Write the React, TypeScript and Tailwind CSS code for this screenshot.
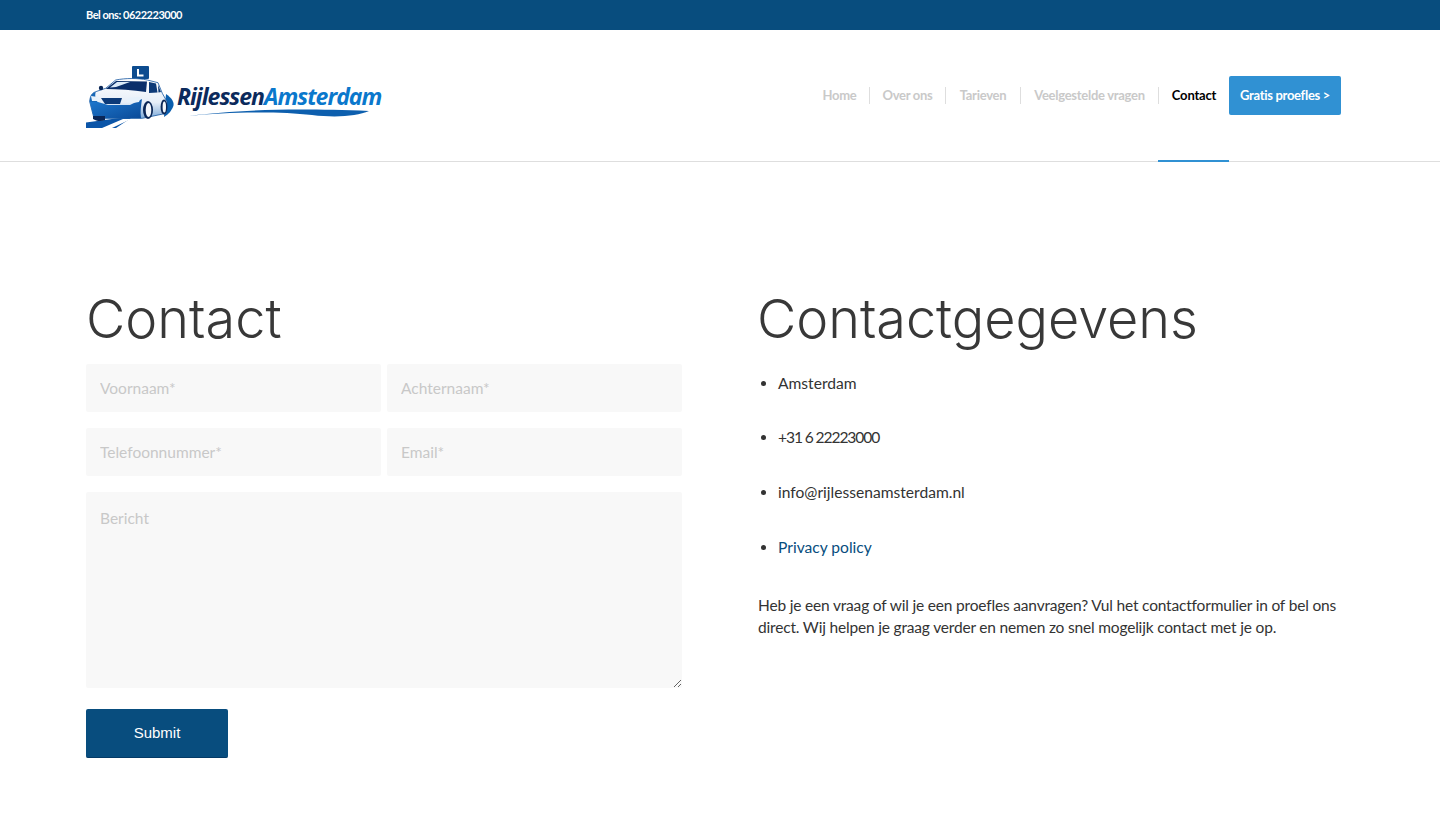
import React from 'react';

const NAV_ITEMS = [
  { label: 'Home', width: 'w-[60px]' },
  { label: 'Over ons', width: 'w-[76px]' },
  { label: 'Tarieven', width: 'w-[75px]' },
  { label: 'Veelgestelde vragen', width: 'w-[137px]' },
];

const inputClass =
  "h-12 w-full rounded-[2px] bg-[#f8f8f8] px-3.5 text-[15.5px] text-[#333] outline-none placeholder:text-[#c8c8c8]";

function LogoCar() {
  return (
    <svg width="90" height="62" viewBox="0 0 90 62" className="shrink-0">
      <defs>
        <linearGradient id="side" x1="0" y1="0" x2="0" y2="1">
          <stop offset="0" stopColor="#ffffff" />
          <stop offset="0.6" stopColor="#e6eef8" />
          <stop offset="1" stopColor="#7fabd9" />
        </linearGradient>
        <linearGradient id="front" x1="0" y1="0" x2="1" y2="1">
          <stop offset="0" stopColor="#1f7ad0" />
          <stop offset="1" stopColor="#0a4a98" />
        </linearGradient>
      </defs>
      {/* swoosh behind car */}
      <path d="M80 28 C86 32 89 37 87 41 C85 45 83 48 78 51 Z" fill="#0b5fae" />
      {/* road */}
      <path d="M0 62 L0 56.5 L48 50 L30 62 Z" fill="#0b55a8" />
      <path d="M16 62 L37 53 L45 53 L26 62 Z" fill="#ffffff" />
      {/* L sign */}
      <rect x="46" y="0" width="17" height="13" rx="1" fill="#0d4c8f" />
      <path d="M52 3 V9.5 H57.5" fill="none" stroke="#ffffff" strokeWidth="2" />
      {/* body */}
      <path d="M3.7 35.7 C4 30 6 27 9.7 25.7 L19.7 22.3 L29.7 14 C40 12 52 12 61.3 14 L72 16.7 L76.3 27.3 L81 35.7 L80.3 47.3 L56.3 52.3 L8 52.3 Z" fill="url(#side)" stroke="#14559f" strokeWidth="0.8" />
      {/* lower front */}
      <path d="M3.7 35.7 C5 33 7 33 12 36 L22 39 L44 39 L52 35 L56 33 C55 40 54 46 55 52.3 L8 52.3 Z" fill="url(#front)" />
      {/* left fender */}
      <path d="M3.7 35.7 C4 30 6 27 9.7 25.7 C9 29 9 31 11 36 Z" fill="#1667b7" />
      {/* windshield */}
      <path d="M19.7 23 L30 15 L61 15.5 L60 26 C47 24 32 23 19.7 23 Z" fill="#0a2f6b" />
      <path d="M24 21.5 L31 16 L44 16 L30 21 Z" fill="#dcebf9" />
      {/* side windows */}
      <path d="M63 16 L70 17.5 L71.5 26.5 L63 27 Z" fill="#0d3a78" />
      <path d="M72 19 L75 26 L72.5 26.5 Z" fill="#0d3a78" />
      {/* grille */}
      <path d="M15 32 H36 L34 38 H19 Z" fill="#0c3a78" />
      {/* headlights */}
      <path d="M5 30 L12 31 L13 35 L6 35 Z" fill="#e6f1fb" />
      <path d="M41 33 C45 31 50 31 55 31 L53 36 C49 37 45 37 41 36 Z" fill="#e6f1fb" />
      {/* wheels */}
      <path d="M7 50 H19 V54 C15 56 10 55 7 53 Z" fill="#0a2656" />
      <ellipse cx="62" cy="44" rx="5" ry="9" fill="#0a2656" />
      <ellipse cx="62.5" cy="44" rx="2.8" ry="7" fill="#f4f7fb" />
      <ellipse cx="78" cy="41" rx="3.4" ry="7.5" fill="#0a2656" />
      <ellipse cx="78.3" cy="41" rx="1.7" ry="5.5" fill="#f4f7fb" />
      {/* mirror */}
      <circle cx="15" cy="22" r="2.2" fill="#0a2656" />
    </svg>
  );
}

function Logo() {
  return (
    <div className="flex items-start">
      <LogoCar />
      <div className="ml-[1px] mt-[17px] flex w-[206px] flex-col">
        <div className="whitespace-nowrap text-[23px] font-bold italic leading-[26px] tracking-[-0.98px] font-['Open_Sans',sans-serif]">
          <span className="text-[#0b2a5c]">Rijlessen</span>
          <span className="text-[#0a78cc]">Amsterdam</span>
        </div>
        <svg width="206" height="10" viewBox="0 0 206 10" className="mt-[-1px]">
          <path d="M11 8 C60 2 110 0 192 3 C180 8 160 10 135 7 C100 3 50 4 11 8 Z" fill="#0d5fae" />
        </svg>
      </div>
    </div>
  );
}

export default function App() {
  return (
    <div className="min-h-[820px] bg-white font-['Lato',sans-serif] text-[#333]">
      {/* TOP BAR */}
      <div className="h-[30px] bg-[#084d7e]">
        <div className="mx-[86px] flex h-full items-center text-[11px] font-bold tracking-[-0.48px] text-white">
          Bel ons: 0622223000
        </div>
      </div>

      {/* HEADER */}
      <header className="h-[132px] border-b border-[#dedede]">
        <div className="ml-[86px] mr-[99px] flex h-[131px] justify-between">
          <div className="pt-9">
            <Logo />
          </div>
          <nav className="flex items-center">
            {NAV_ITEMS.map((item, i) => (
              <div key={item.label} className={`flex h-[17px] items-center justify-center text-[13px] font-bold tracking-[-0.28px] text-[#c9c9c9] ${item.width} ${i < 3 ? 'border-r border-[#dedede]' : ''}`}>
                {item.label}
              </div>
            ))}
            <div className="relative flex h-full w-[71px] items-center justify-center">
              <span className="h-[17px] w-full border-l border-[#dedede] text-center text-[13px] font-bold leading-[17px] tracking-[-0.2px] text-black">
                Contact
              </span>
              <span className="absolute inset-x-0 bottom-[-1px] h-0.5 bg-[#3091d3]" />
            </div>
            <a className="flex h-[39px] w-[112px] items-center justify-center rounded-[2px] bg-[#3091d3] text-[13px] font-bold tracking-[-0.3px] text-white">
              Gratis proefles &gt;
            </a>
          </nav>
        </div>
      </header>

      {/* CONTENT */}
      <main className="ml-[86px] mr-[99px] flex gap-[76px] pt-[124px]">
        <section className="w-[596px]">
          <h1 className="text-[54px] font-light leading-[66px] text-[#383838] font-['Inter',sans-serif]">Contact</h1>
          <form className="mt-3 flex flex-col">
            <div className="grid grid-cols-2 gap-x-1.5 gap-y-4">
              <input className={inputClass} placeholder="Voornaam*" />
              <input className={inputClass} placeholder="Achternaam*" />
              <input className={inputClass} placeholder="Telefoonnummer*" />
              <input className={inputClass} placeholder="Email*" />
            </div>
            <textarea
              className="mt-4 block h-[196px] w-full rounded-[2px] bg-[#f8f8f8] px-3.5 py-[15px] text-[15.5px] text-[#333] outline-none placeholder:text-[#c8c8c8]"
              placeholder="Bericht"
            />
            <button
              type="button"
              className="mt-[21px] h-[49px] w-[142px] rounded-[2px] border-b border-[#043a66] bg-[#084d7e] text-[15px] text-white font-['Liberation_Sans',sans-serif]"
            >
              Submit
            </button>
          </form>
        </section>

        <section className="w-[583px]">
          <h1 className="ml-[-1px] text-[54px] font-light leading-[66px] tracking-[-0.05px] text-[#383838] font-['Inter',sans-serif]">Contactgegevens</h1>
          <ul className="mt-5 list-disc pl-5 text-[15.6px] leading-[22px] text-[#333]">
            <li>Amsterdam</li>
            <li className="mt-[32px] tracking-[-1.1px]">+31 6 22223000</li>
            <li className="mt-[33px]">info@rijlessenamsterdam.nl</li>
            <li className="mt-[33px] text-[#084d7e] marker:text-[#333]">Privacy policy</li>
          </ul>
          <p className="mt-[36px] text-[15.5px] leading-[22px] tracking-[-0.18px]">
            Heb je een vraag of wil je een proefles aanvragen? Vul het contactformulier in of bel ons direct. Wij helpen je graag verder en nemen zo snel mogelijk contact met je op.
          </p>
        </section>
      </main>
    </div>
  );
}
